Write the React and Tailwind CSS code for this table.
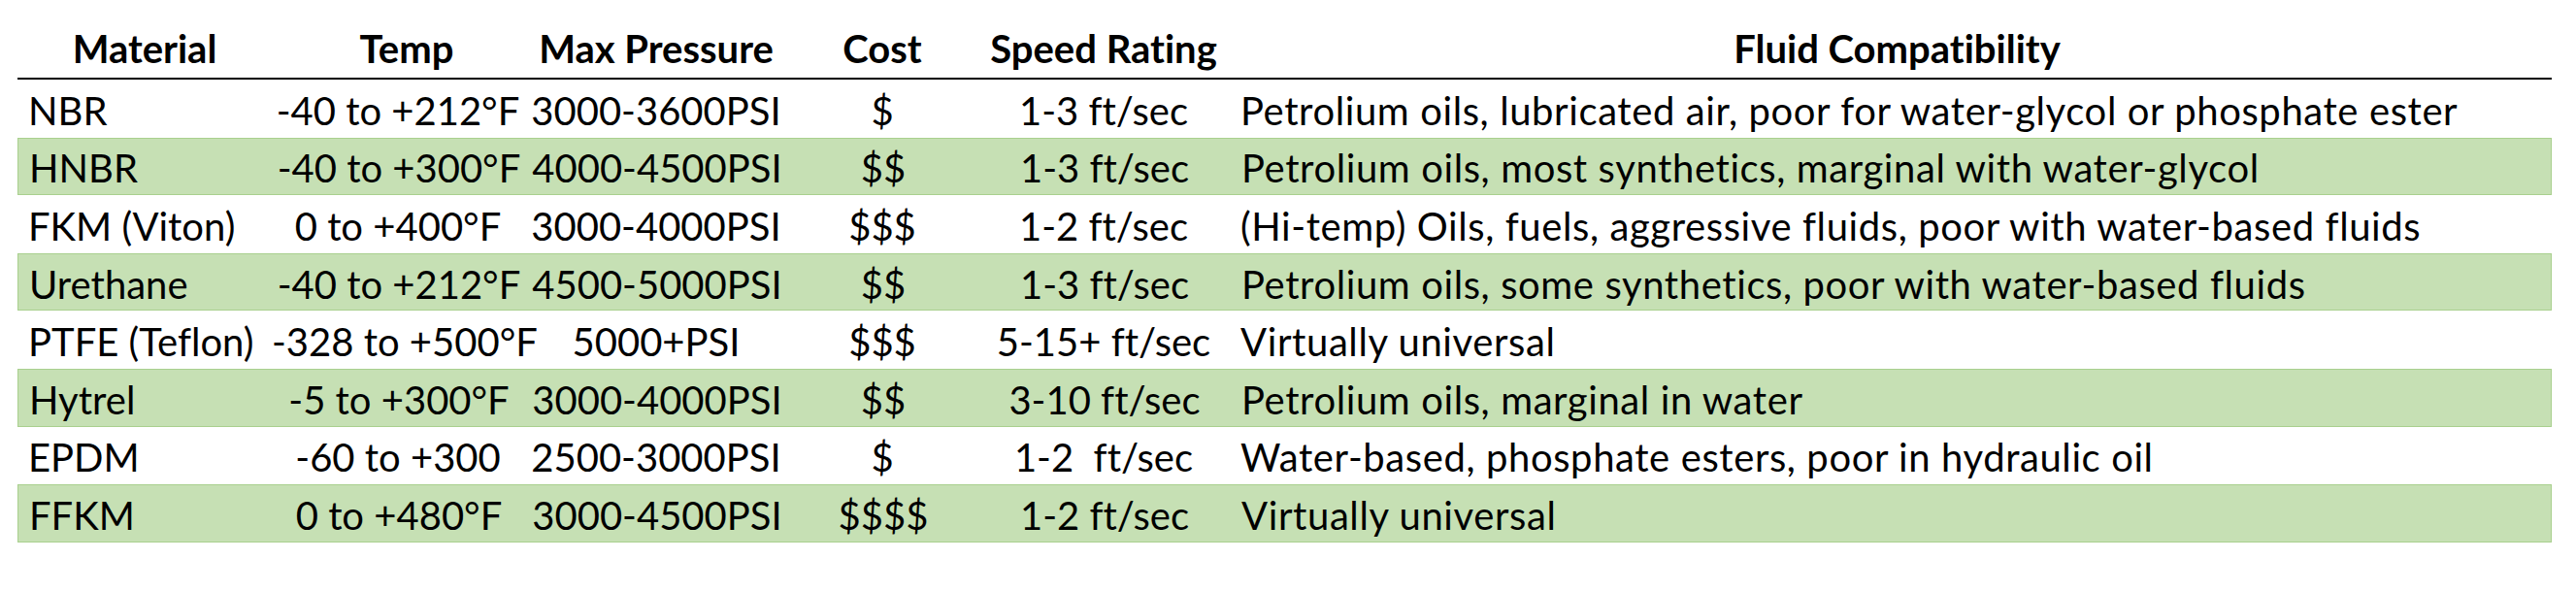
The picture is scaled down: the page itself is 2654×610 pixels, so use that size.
import React from 'react';

const rows = [
  ['NBR', '-40 to +212°F', '3000-3600PSI', '$', '1-3 ft/sec', 'Petrolium oils, lubricated air, poor for water-glycol or phosphate ester'],
  ['HNBR', '-40 to +300°F', '4000-4500PSI', '$$', '1-3 ft/sec', 'Petrolium oils, most synthetics, marginal with water-glycol'],
  ['FKM (Viton)', '0 to +400°F', '3000-4000PSI', '$$$', '1-2 ft/sec', '(Hi-temp) Oils, fuels, aggressive fluids, poor with water-based fluids'],
  ['Urethane', '-40 to +212°F', '4500-5000PSI', '$$', '1-3 ft/sec', 'Petrolium oils, some synthetics, poor with water-based fluids'],
  ['PTFE (Teflon)', '-328 to +500°F', '5000+PSI', '$$$', '5-15+ ft/sec', 'Virtually universal'],
  ['Hytrel', '-5 to +300°F', '3000-4000PSI', '$$', '3-10 ft/sec', 'Petrolium oils, marginal in water'],
  ['EPDM', '-60 to +300', '2500-3000PSI', '$', '1-2  ft/sec', 'Water-based, phosphate esters, poor in hydraulic oil'],
  ['FFKM', '0 to +480°F', '3000-4500PSI', '$$$$', '1-2 ft/sec', 'Virtually universal'],
];

const cols = 'grid grid-cols-[262px_260px_272px_194px_262px_1fr]';

export default function App() {
  return (
    <div className="w-[2654px] h-[610px] bg-white font-['Lato','Liberation_Sans',sans-serif] text-[40px] text-black [font-variant-ligatures:none]">
      <div className="ml-[18px] w-[2611px]">
        {/* encabezado */}
        <div className={`${cols} h-[82px] items-end pb-[6px] border-b-2 border-black font-bold leading-[48px]`}>
          <div className="text-center">Material</div>
          <div className="text-center pl-[18px]">Temp</div>
          <div className="text-center">Max Pressure</div>
          <div className="text-center">Cost</div>
          <div className="text-center">Speed Rating</div>
          <div className="text-center pl-[12px]">Fluid Compatibility</div>
        </div>

        {rows.map((r, i) => (
          <div
            key={r[0]}
            className={`${cols} h-[59.6px] items-center leading-none whitespace-pre ${
              i % 2 === 1 ? 'bg-[#c6e0b4] border border-[#a9d08e]' : 'bg-white'
            }`}
          >
            <div className="pl-[11px] pt-[4px]">{r[0]}</div>
            <div className="text-center pt-[4px]">{r[1]}</div>
            <div className="text-center pt-[4px]">{r[2]}</div>
            <div className="text-center pt-[4px]">{r[3]}</div>
            <div className="text-center pt-[4px]">{r[4]}</div>
            <div className="pl-[10px] pt-[4px] tracking-[0.6px]">{r[5]}</div>
          </div>
        ))}
      </div>
    </div>
  );
}
